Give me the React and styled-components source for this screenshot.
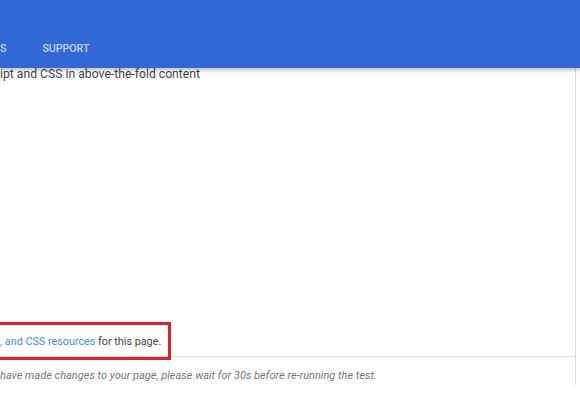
import React from 'react';
import styled, { createGlobalStyle } from "styled-components";

const GlobalStyle = createGlobalStyle`
  html, body {
    margin: 0;
    padding: 0;
    background: #fff;
    overflow: hidden;
  }
  body {
    font-family: Roboto, "Liberation Sans", Arial, sans-serif;
    color: #444;
  }
`;

const Header = styled.header`
  position: relative;
  z-index: 2;
  height: 68px;
  background: #3367d6;
  box-shadow: 0 2px 4px rgba(0, 0, 0, 0.28);
  display: flex;
  align-items: flex-end;
`;

const Nav = styled.nav`
  display: flex;
  gap: 36px;
  padding-bottom: 12px;
`;

const Tab = styled.span`
  font-size: 10.6px;
  font-weight: 500;
  line-height: 14px;
  color: rgba(255, 255, 255, 0.72);
`;

const Card = styled.main`
  position: relative;
  z-index: 1;
  box-sizing: border-box;
  width: 576px;
  height: 322px;
  margin-top: -5px;
  border-right: 1px solid #dcdcdc;
  display: flex;
  flex-direction: column;
`;

const RuleTitle = styled.div`
  padding-top: 2px;
  font-size: 12.2px;
  line-height: 19px;
  color: #444;
`;

const Body = styled.section`
  flex: 1;
  display: flex;
  flex-direction: column;
  justify-content: flex-end;
  border-bottom: 1px solid #dcdcdc;
`;

const Highlight = styled.div`
  position: relative;
  z-index: 1;
  box-sizing: border-box;
  width: 174px;
  height: 38px;
  margin-left: -3px;
  margin-bottom: -4px;
  border: 3px solid #e3202a;
  display: flex;
  align-items: center;
  font-size: 10.8px;
  color: #444;
  white-space: nowrap;
  overflow: hidden;
`;

const Link = styled.a`
  color: #3d8fe3;
  text-decoration: none;
`;

const Note = styled.footer`
  box-sizing: border-box;
  height: 28px;
  padding-top: 10px;
  line-height: 18px;
  font-size: 11px;
  font-style: italic;
  color: #777;
  white-space: nowrap;
`;

const App = () => {
  return (
    <>
      <GlobalStyle />
      <Header>
        <Nav>
          <Tab>S</Tab>
          <Tab>SUPPORT</Tab>
        </Nav>
      </Header>
      <Card>
        <RuleTitle>ipt and CSS in above-the-fold content</RuleTitle>
        <Body>
          <Highlight>
            <Link href="#">, and CSS resources</Link>&nbsp;for this page.
          </Highlight>
        </Body>
        <Note>have made changes to your page, please wait for 30s before re-running the test.</Note>
      </Card>
    </>
  );
};

export default App;
